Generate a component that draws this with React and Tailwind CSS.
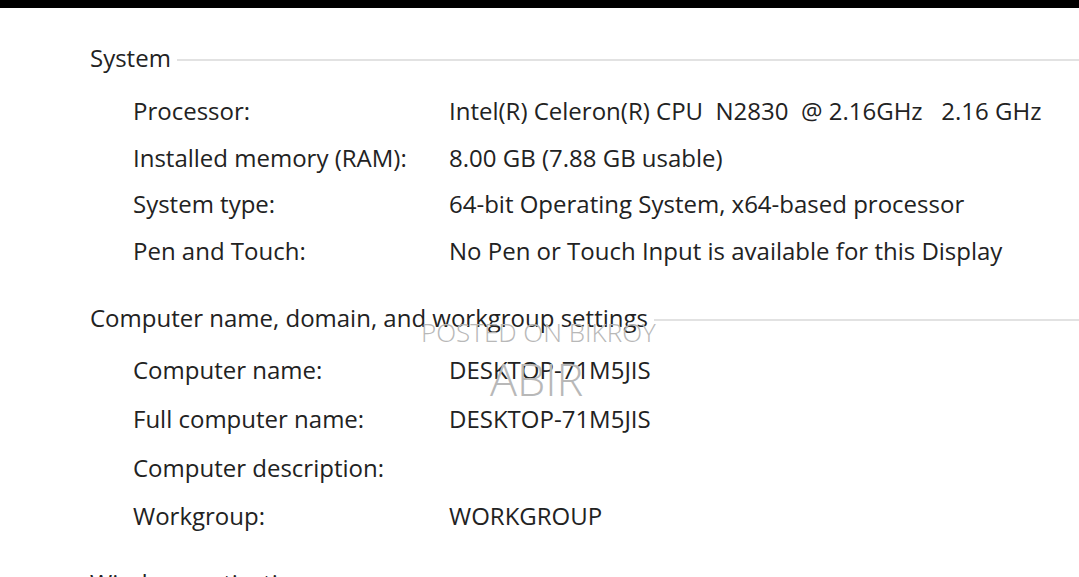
import React from "react";

const font = { fontFamily: '"Open Sans", "Noto Sans", sans-serif' };

function Header({ title }) {
  return (
    <div className="flex items-center h-[30px]">
      <span className="text-[24px] leading-[30px] text-[#222] whitespace-nowrap">{title}</span>
      <div className="flex-1 h-[2px] bg-[#e2e2e2] ml-[6px] mt-[4px]" />
    </div>
  );
}

function Row({ label, value, h }) {
  return (
    <div className={`grid grid-cols-[316px_1fr] items-center text-[24px] text-[#222] ${h}`}>
      <span className="whitespace-pre">{label}</span>
      <span className="whitespace-pre">{value}</span>
    </div>
  );
}

export default function App() {
  return (
    <div className="w-[1079px] h-[577px] overflow-hidden bg-white relative" style={font}>
      <div className="h-[8px] bg-black" />
      <div className="pl-[90px] pt-[35px]">
        <Header title="System" />
        <div className="pl-[43px] pt-[15px]">
          <Row h="h-[46.5px]" label="Processor:" value="Intel(R) Celeron(R) CPU  N2830  @ 2.16GHz   2.16 GHz" />
          <Row h="h-[46.5px]" label="Installed memory (RAM):" value="8.00 GB (7.88 GB usable)" />
          <Row h="h-[46.5px]" label="System type:" value="64-bit Operating System, x64-based processor" />
          <Row h="h-[46.5px]" label="Pen and Touch:" value="No Pen or Touch Input is available for this Display" />
        </div>
        <div className="pt-[29px]">
          <Header title="Computer name, domain, and workgroup settings" />
        </div>
        <div className="pl-[43px] pt-[13px]">
          <Row h="h-[48.7px]" label="Computer name:" value="DESKTOP-71M5JIS" />
          <Row h="h-[48.7px]" label="Full computer name:" value="DESKTOP-71M5JIS" />
          <Row h="h-[48.7px]" label="Computer description:" value="" />
          <Row h="h-[48.7px]" label="Workgroup:" value="WORKGROUP" />
        </div>
        <div className="pt-[27px] text-[24px] text-[#222] leading-[30px]">Windows activation</div>
      </div>
      <div className="absolute left-[421px] top-[319px] text-[26px] leading-none text-[#b8b8b8] font-light whitespace-nowrap">
        POSTED ON BIKROY
      </div>
      <div className="absolute left-[490px] top-[356px] text-[45px] leading-none text-[#b8b8b8] font-light whitespace-nowrap">
        ABIR
      </div>
    </div>
  );
}
